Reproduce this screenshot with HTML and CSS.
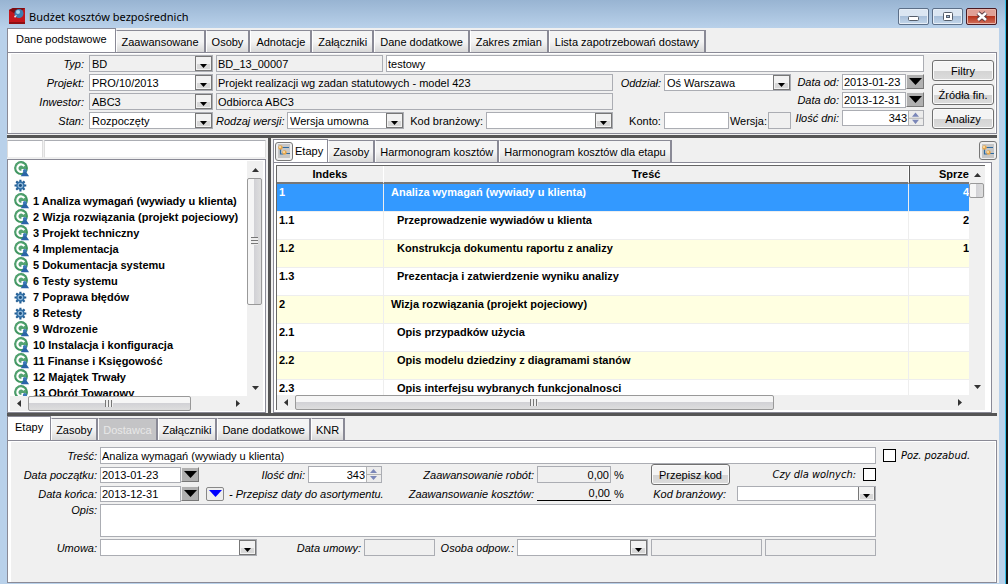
FILE: index.html
```html
<!DOCTYPE html>
<html lang="pl">
<head>
<meta charset="utf-8">
<title>Budżet kosztów bezpośrednich</title>
<link rel="stylesheet" href="styles.css">
</head>
<body>
<svg class="defs" aria-hidden="true">
  <symbol id="stage" viewBox="0 0 15 15">
    <circle cx="6.600" cy="6.600" r="6.500" fill="#3f9560"/>
    <circle cx="6.200" cy="6" r="5.200" fill="#62ad7d" opacity=".6"/>
    <path d="M9.600 4.800A3.500 3.500 0 1 0 9.600 8.600H7" fill="none" stroke="#fff" stroke-width="2"/>
    <circle cx="10.200" cy="9.400" r="1.900" fill="#3a78b8"/>
    <path d="M6.200 14.200 8.800 10.600h2.800l2.600 3.600z" fill="#2a64a8"/>
  </symbol>
  <symbol id="gear" viewBox="0 -2 15 15">
    <g stroke="#235d92" stroke-width="2"><path d="M6 .5v11M.5 6h11M2.100 2.100l7.800 7.800M9.900 2.100 2.100 9.900"/></g>
    <circle cx="6" cy="6" r="4" fill="#2f6ea6"/><circle cx="6" cy="6" r="2.600" fill="#8fb8da"/><circle cx="6" cy="6" r="1.400" fill="#1c4f80"/>
  </symbol>
  <symbol id="org" viewBox="0 0 14 14">
    <path d="M1 0h12v14H1z" fill="#c6c6c6"/>
    <path d="M3.500 5v5h3M5 3.500h7M9 9.500h4" fill="none" stroke="#2d6aa0" stroke-width="1.200"/>
    <circle cx="3.500" cy="3.500" r="2.200" fill="#e7a64b"/><circle cx="7.500" cy="8.500" r="2.200" fill="#e7a64b"/>
    <circle cx="3" cy="3" r="1" fill="#fbe2b0"/><circle cx="7" cy="8" r="1" fill="#fbe2b0"/>
  </symbol>
  <symbol id="up" viewBox="0 0 7 4"><path d="M0 4 3.500 0 7 4z" fill="#333"/></symbol>
  <symbol id="down" viewBox="0 0 7 4"><path d="M0 0h7L3.500 4z" fill="#333"/></symbol>
  <symbol id="left" viewBox="0 0 4 7"><path d="M4 0v7L0 3.500z" fill="#333"/></symbol>
  <symbol id="right" viewBox="0 0 4 7"><path d="M0 0v7L4 3.500z" fill="#333"/></symbol>
  <symbol id="pick" viewBox="0 0 13 7"><path d="M0 0h13L6.500 7z" fill="currentColor"/></symbol>
</svg>

<header class="titlebar">
  <svg class="logo" viewBox="0 0 16 16"><path d="M0 2 4 0h12v16H0z" fill="#c4161c"/><path d="M0 2 4 0h12L8 7z" fill="#7c0d12"/><path d="M0 16h16v-2H0z" fill="#8f0f14"/><circle cx="10" cy="5.500" r="4.500" fill="#3f7fb0"/><circle cx="9" cy="4" r="2" fill="#a8d4ea"/><path d="M8 7 6 10 5 8z" fill="#e8f2f8"/></svg>
  <h1>Budżet kosztów bezpośrednich</h1>
  <button class="win" aria-label="Minimalizuj"><svg viewBox="0 0 29 15"><rect x="9.500" y="7.500" width="10" height="4" rx="1" fill="#fff" stroke="#555e6b"/></svg></button>
  <button class="win" aria-label="Przywróć"><svg viewBox="0 0 29 15"><rect x="10.500" y="3.500" width="9" height="8" rx="1" fill="#fff" stroke="#555e6b"/><rect x="13.500" y="6.500" width="3" height="2" fill="#9fb8d4" stroke="#555e6b"/></svg></button>
  <button class="win close" aria-label="Zamknij"><svg viewBox="0 0 29 15"><path d="m11 4 8 7m0-7-8 7" stroke="#5a3a42" stroke-width="4.400"/><path d="m11 4 8 7m0-7-8 7" stroke="#fff" stroke-width="2.600"/></svg></button>
</header>

<main class="frame">
  <nav class="tabs top-tabs">
    <button class="tab on">Dane podstawowe</button><button class="tab">Zaawansowane</button><button class="tab">Osoby</button><button class="tab">Adnotacje</button><button class="tab">Załączniki</button><button class="tab">Dane dodatkowe</button><button class="tab">Zakres zmian</button><button class="tab">Lista zapotrzebowań dostawy</button>
  </nav>
  <form class="panel head-form">
    <div class="fields">
      <div class="row">
        <label class="lead" for="typ">Typ:</label>
        <select id="typ" class="off w-code"><option>BD</option></select>
        <input class="off w-number" aria-label="Numer" value="BD_13_00007" readonly>
        <input class="grow" aria-label="Nazwa" value="testowy">
      </div>
      <div class="split">
        <div class="rows grow">
          <div class="row">
            <label class="lead" for="proj">Projekt:</label>
            <select id="proj" class="w-code"><option>PRO/10/2013</option></select>
            <input class="off grow" aria-label="Nazwa projektu" value="Projekt realizacji wg zadan statutowych - model 423" readonly>
            <label class="side" for="odd">Oddział:</label>
            <select id="odd" class="w-branch"><option>Oś Warszawa</option></select>
          </div>
          <div class="row">
            <label class="lead" for="inw">Inwestor:</label>
            <select id="inw" class="off w-code"><option>ABC3</option></select>
            <input class="off grow" aria-label="Nazwa inwestora" value="Odbiorca ABC3" readonly>
            <span class="side-space"></span>
          </div>
          <div class="row">
            <label class="lead" for="stan">Stan:</label>
            <select id="stan" class="w-code"><option>Rozpoczęty</option></select>
            <label class="w-kind" for="rodz">Rodzaj wersji:</label>
            <select id="rodz" class="w-kindbox"><option>Wersja umowna</option></select>
            <label class="plain w-trade" for="kodb">Kod branżowy:</label>
            <select id="kodb" class="grow"><option></option></select>
            <label class="plain side" for="konto">Konto:</label>
            <input id="konto" class="w-account">
            <label class="plain tight" for="wer">Wersja:</label>
            <input id="wer" class="off w-version" readonly>
          </div>
        </div>
        <div class="dates">
          <div class="row"><label for="dod">Data od:</label><span class="date"><input id="dod" value="2013-01-23"><button type="button" class="pick" aria-label="Wybierz datę"><svg><use href="#pick"/></svg></button></span></div>
          <div class="row"><label for="ddo">Data do:</label><span class="date"><input id="ddo" value="2013-12-31"><button type="button" class="pick" aria-label="Wybierz datę"><svg><use href="#pick"/></svg></button></span></div>
          <div class="row"><label for="dni">Ilość dni:</label><span class="date"><input id="dni" class="spin" value="343"></span></div>
        </div>
      </div>
    </div>
    <div class="actions"><button type="button" class="btn">Filtry</button><button type="button" class="btn">Źródła fin.</button><button type="button" class="btn">Analizy</button></div>
  </form>

  <section class="middle">
    <aside class="tree-pane">
      <div class="filters"><input class="f-id" aria-label="Filtr numeru"><input class="grow" aria-label="Filtr nazwy"></div>
      <div class="tree-box">
        <div class="scroll-area">
          <ul class="tree">
            <li><svg><use href="#stage"/></svg></li>
            <li><svg><use href="#gear"/></svg></li>
            <li><svg><use href="#stage"/></svg>1 Analiza wymagań (wywiady u klienta)</li>
            <li><svg><use href="#stage"/></svg>2 Wizja rozwiązania (projekt pojeciowy)</li>
            <li><svg><use href="#stage"/></svg>3 Projekt techniczny</li>
            <li><svg><use href="#stage"/></svg>4 Implementacja</li>
            <li><svg><use href="#stage"/></svg>5 Dokumentacja systemu</li>
            <li><svg><use href="#stage"/></svg>6 Testy systemu</li>
            <li><svg><use href="#gear"/></svg>7 Poprawa błędów</li>
            <li><svg><use href="#gear"/></svg>8 Retesty</li>
            <li><svg><use href="#stage"/></svg>9 Wdrozenie</li>
            <li><svg><use href="#stage"/></svg>10 Instalacja i konfiguracja</li>
            <li><svg><use href="#stage"/></svg>11 Finanse i Księgowość</li>
            <li><svg><use href="#stage"/></svg>12 Majątek Trwały</li>
            <li><svg><use href="#stage"/></svg>13 Obrót Towarowy</li>
          </ul>
          <div class="vbar"><svg class="v"><use href="#up"/></svg><div class="track"><div class="thumb tall"></div></div><svg class="v"><use href="#down"/></svg></div>
        </div>
        <div class="hbar"><svg class="h"><use href="#left"/></svg><div class="track"><div class="thumb wide"></div></div><svg class="h"><use href="#right"/></svg><span class="corner"></span></div>
      </div>
    </aside>

    <div class="grid-pane">
      <nav class="tabs grid-tabs">
        <div class="tab on with-icon"><button class="icon-btn" aria-label="Drzewo"><svg><use href="#org"/></svg></button><button class="bare">Etapy</button></div><button class="tab">Zasoby</button><button class="tab">Harmonogram kosztów</button><button class="tab">Harmonogram kosztów dla etapu</button>
        <button class="icon-btn end" aria-label="Układ"><svg><use href="#org"/></svg></button>
      </nav>
      <div class="grid-box"><div class="grid-inner">
        <div class="scroll-area">
          <div class="table-clip">
            <table>
              <thead><tr><th class="c-id">Indeks</th><th>Treść</th><th class="c-eq">Sprze</th></tr></thead>
              <tbody>
                <tr class="sel"><td>1</td><td>Analiza wymagań (wywiady u klienta)</td><td>4</td></tr>
                <tr><td>1.1</td><td class="sub">Przeprowadzenie wywiadów u klienta</td><td>2</td></tr>
                <tr><td>1.2</td><td class="sub">Konstrukcja dokumentu raportu z analizy</td><td>1</td></tr>
                <tr><td>1.3</td><td class="sub">Prezentacja i zatwierdzenie wyniku analizy</td><td></td></tr>
                <tr><td>2</td><td>Wizja rozwiązania (projekt pojeciowy)</td><td></td></tr>
                <tr><td>2.1</td><td class="sub">Opis przypadków użycia</td><td></td></tr>
                <tr><td>2.2</td><td class="sub">Opis modelu dziedziny z diagramami stanów</td><td></td></tr>
                <tr><td>2.3</td><td class="sub">Opis interfejsu wybranych funkcjonalnosci</td><td></td></tr>
              </tbody>
            </table>
          </div>
          <div class="vbar"><svg class="v"><use href="#up"/></svg><div class="track"><div class="thumb short"></div></div><svg class="v"><use href="#down"/></svg></div>
        </div>
        <div class="hbar"><svg class="h"><use href="#left"/></svg><div class="track"><div class="thumb wide"></div></div><svg class="h"><use href="#right"/></svg><span class="corner"></span></div>
      </div></div>
    </div>
  </section>

  <nav class="tabs low-tabs">
    <button class="tab on">Etapy</button><button class="tab">Zasoby</button><button class="tab" disabled>Dostawca</button><button class="tab">Załączniki</button><button class="tab">Dane dodatkowe</button><button class="tab">KNR</button>
  </nav>
  <form class="panel detail-form">
    <div class="row">
      <label class="lead" for="tresc">Treść:</label>
      <input id="tresc" class="grow" value="Analiza wymagań (wywiady u klienta)">
      <span class="outside"><input type="checkbox" id="poz"><label class="ui" for="poz">Poz. pozabud.</label></span>
    </div>
    <div class="row">
      <label class="lead" for="dpo">Data początku:</label>
      <span class="date"><input id="dpo" value="2013-01-23"><button type="button" class="pick" aria-label="Wybierz datę"><svg><use href="#pick"/></svg></button></span>
      <label class="w-days" for="dn2">Ilość dni:</label>
      <input id="dn2" class="spin w-spin" value="343">
      <label class="grow" for="zr">Zaawansowanie robót:</label>
      <input id="zr" class="off num w-spin" value="0,00" readonly><span class="pct">%</span>
      <span class="w-copy"><button type="button" class="btn">Przepisz kod</button></span>
      <span class="w-free"><label class="ui" for="wol">Czy dla wolnych:</label><input type="checkbox" id="wol"></span>
      <span class="outside"></span>
    </div>
    <div class="row">
      <label class="lead" for="dko">Data końca:</label>
      <span class="date"><input id="dko" value="2013-12-31"><button type="button" class="pick" aria-label="Wybierz datę"><svg><use href="#pick"/></svg></button></span>
      <button type="button" class="copy-dates" aria-label="Przepisz daty"><svg><use href="#pick"/></svg></button>
      <span class="hint">- Przepisz daty do asortymentu.</span>
      <label class="grow" for="zk">Zaawansowanie kosztów:</label>
      <input id="zk" class="line num w-spin" value="0,00" readonly><span class="pct">%</span>
      <label class="w-copy" for="kb2">Kod branżowy:</label>
      <span class="w-free"><select id="kb2" class="w-trade2"><option></option></select></span>
      <span class="outside"></span>
    </div>
    <div class="row memo">
      <label class="lead" for="opis">Opis:</label>
      <textarea id="opis" class="grow"></textarea>
      <span class="outside"></span>
    </div>
    <div class="row">
      <label class="lead" for="umo">Umowa:</label>
      <select id="umo" class="w-contract"><option></option></select>
      <label class="w-cdate" for="dum">Data umowy:</label>
      <input id="dum" class="off w-cfield" readonly>
      <label class="w-person" for="oso">Osoba odpow.:</label>
      <select id="oso" class="w-personbox"><option></option></select>
      <input class="off grow" aria-label="Imię" readonly>
      <input class="off grow" aria-label="Nazwisko" readonly>
      <span class="outside"></span>
    </div>
  </form>
</main>
</body>
</html>
```

FILE: styles.css
```css
* { box-sizing: border-box; }
body {
  margin: 0; height: 100vh; display: flex; flex-direction: column; overflow: hidden;
  font: 11px "Liberation Sans", Arial, sans-serif; color: #000; background: #b9d1ea;
  border-right: 2px solid #111; box-shadow: inset -1px 0 #38c0e8;
}
button, input, select, textarea { font: inherit; color: inherit; margin: 0; border-radius: 0; }
button { padding: 0; }
.defs { position: absolute; width: 0; height: 0; }
.grow { flex: 1; min-width: 0; }

.titlebar { display: flex; align-items: center; gap: 3px; height: 28px; flex: none; padding: 4px 8px 0 9px; background: linear-gradient(#98b4d2, #b9d1ea); border-right: 1px solid #38c0e8; }
.titlebar h1 { flex: 1; margin: 0 0 0 1px; font: 11px "Noto Sans", "Open Sans", sans-serif; }
.logo { width: 16px; height: 16px; }
.win { width: 31px; height: 17px; border: 1px solid #5c6f88; border-radius: 2px; background: linear-gradient(#dbe6f2 45%, #a9c0da 50%, #c3d6ea); box-shadow: inset 0 0 0 1px #e6eef7; }
.win svg { display: block; width: 29px; height: 15px; }
.close { border-color: #4b1a22; background: linear-gradient(#e0a096 45%, #b8341d 50%, #d0705c); box-shadow: inset 0 0 0 1px #e8b5aa; }

.frame { flex: 1; min-height: 0; display: flex; flex-direction: column; margin: 0 7px 1px 7px; padding-right: 2px; background: #f0f0f0; }

.tabs { display: flex; align-items: flex-end; flex: none; height: 24px; }
.tab { height: 22px; padding: 0 4px; border: 1px solid #8a8a96; border-left-color: #fff; border-right-width: 2px; border-bottom: 0; background: linear-gradient(#f4f4f4 50%, #d9d9d9); white-space: nowrap; }
.tab.on { height: 24px; padding: 0 7px 3px; background: #fff; border-right-width: 1px; border-left-color: #8a8a96; }
.tab:disabled { background: #c4c4c6; color: #e8e8e8; }
.top-tabs .tab { padding: 0 5px; }
.top-tabs .tab.on { padding: 0 8px 3px; }

.panel { flex: none; border: 1px solid #8a8a96; background: #f0f0f0; box-shadow: inset 3px 1px #fff, inset -1px 0 #fff; }
.row { display: flex; align-items: center; height: 17px; gap: 3px; }
label { font-style: italic; text-align: right; white-space: nowrap; }
label.plain { font-style: normal; }
label.ui { font-family: "DejaVu Sans Condensed", "Noto Sans", sans-serif; }
label.tight { margin: 0 -2px; }
input, select, textarea { height: 17px; border: 1px solid #abadb3; padding: 0 1px; background: #fff; outline: 0; }
textarea { resize: none; height: 100%; }
select {
  appearance: none; padding: 0 20px 0 2px;
  background: #fff url("data:image/svg+xml,%3Csvg xmlns='http://www.w3.org/2000/svg' width='17' height='15'%3E%3Crect x='.5' y='.5' width='16' height='14' fill='%23f2f2f2' stroke='%23777'/%3E%3Crect x='2' y='8' width='13' height='5' fill='%23d8d8d8'/%3E%3Cpath d='M5 8h7l-3.500 4z'/%3E%3C/svg%3E") no-repeat right center;
}
.off { background-color: #f0f0f0; }
.num { text-align: right; }
.spin {
  text-align: right; padding-right: 16px;
  background: #fff url("data:image/svg+xml,%3Csvg xmlns='http://www.w3.org/2000/svg' width='15' height='15'%3E%3Crect width='15' height='15' fill='%23ececec'/%3E%3Cpath d='M.5 0v15M1 7.500h14' stroke='%23b4b4b4'/%3E%3Cpath d='M4 6h7L7.500 2zM4 9h7l-3.500 4z' fill='%237a86b8'/%3E%3C/svg%3E") no-repeat right center;
}
.line { background: transparent; border: 0; border-bottom: 1px solid #000; height: 14px; }

.btn { width: 100%; height: 21px; border: 1px solid #707070; border-radius: 3px; background: linear-gradient(#f4f4f4 50%, #d4d4d4 55%, #dcdcdc); box-shadow: inset 0 0 0 1px #fafafa; }
.date { display: flex; width: 99px; height: 16px; }
.date input { flex: 1; min-width: 0; height: 16px; }
.pick { width: 18px; height: 15px; border: 1px solid; border-color: #eee #777 #777 #eee; background: #b0b0b0; }
.pick svg, .copy-dates svg { display: block; width: 13px; height: 7px; margin: 0 auto; }

.head-form { display: flex; gap: 8px; padding: 2px 2px 4px 3px; }
.fields { flex: 1; min-width: 0; display: flex; flex-direction: column; gap: 2px; }
.split { display: flex; gap: 3px; }
.rows, .dates { display: flex; flex-direction: column; gap: 2px; }
.dates { width: 130px; }
.dates .row { height: 16px; justify-content: flex-end; }
.dates .date { width: 82px; }
.head-form .lead { width: 73px; margin-right: 2px; }
.actions { width: 62px; display: flex; flex-direction: column; gap: 3px; padding-top: 5px; }
.w-code { width: 124px; }
.w-number { width: 167px; }
.side { width: 45px; }
.side-space { width: 175px; }
.w-branch { width: 127px; }
.w-kind { width: 68px; }
.w-kindbox { width: 117px; }
.w-trade { width: 76px; }
.w-account { width: 65px; }
.w-version { width: 23px; }

.middle { flex: 1; min-height: 0; display: flex; border: solid #555; border-width: 3px 0; margin-top: 1px; }
.tree-pane { width: 264px; flex: none; display: flex; flex-direction: column; padding: 2px 2px 0 0; border-right: 3px solid #555; }
.filters { display: flex; gap: 1px; height: 19px; }
.filters input { height: 18px; border-color: #abadb3 #ddd #eee; }
.f-id { width: 36px; }
.tree-box { flex: 1; min-height: 0; display: flex; flex-direction: column; background: #fff; border: 1px solid #8a8a96; padding: 1px 2px; }
.scroll-area { flex: 1; min-height: 0; display: flex; overflow: hidden; }
.tree { flex: 1; min-width: 0; margin: 0; padding: 0 0 0 4px; list-style: none; font-weight: bold; overflow: hidden; }
.tree li { display: flex; align-items: center; height: 16px; white-space: nowrap; }
.tree svg { flex: none; width: 16px; height: 16px; margin-right: 3px; }
.vbar { width: 16px; flex: none; display: flex; flex-direction: column; align-items: center; background: #f0f0f0; }
.v { width: 7px; height: 4px; margin: 7px 0 6px; }
.vbar .track { flex: 1; width: 100%; }
.hbar { display: flex; align-items: center; height: 15px; flex: none; background: #f0f0f0; }
.h { width: 4px; height: 7px; margin: 0 7px; }
.hbar .track { flex: 1; height: 15px; }
.thumb { border: 1px solid #999; border-radius: 2px; }
.vbar .thumb { width: 15px; background: linear-gradient(90deg, #f6f6f6 45%, #d2d2d6 50%, #dedede); }
.hbar .thumb { height: 15px; background: linear-gradient(#f6f6f6 45%, #d2d2d6 50%, #dedede); }
.tall { height: 63%; display: flex; align-items: center; justify-content: center; }
.vbar .tall::before { content: ""; width: 7px; height: 8px; background: repeating-linear-gradient(#777 0 1px, #eee 1px 3px); }
.short { height: 15px; }
.wide { width: 73%; display: flex; align-items: center; justify-content: center; }
.wide::before { content: ""; width: 8px; height: 7px; background: repeating-linear-gradient(90deg, #777 0 1px, #eee 1px 3px); }
.tree-box .wide { width: 81%; }
.corner { width: 16px; }

.grid-pane { flex: 1; min-width: 0; display: flex; flex-direction: column; padding: 1px 0 0 2px; }
.grid-tabs { height: 23px; }
.grid-tabs .on { height: 23px; }
.with-icon { display: flex; align-items: center; gap: 2px; }
.grid-tabs .with-icon { padding: 0 4px 0 1px; }
.bare { border: 0; background: none; }
.icon-btn { width: 18px; height: 19px; border: 1px solid #777; border-radius: 3px; background: #eee; }
.icon-btn svg { display: block; width: 14px; height: 14px; margin: 0 auto; }
.end { margin: 0 0 2px auto; }
.grid-box { flex: 1; min-height: 0; display: flex; margin-right: 5px; background: #fff; border: 1px solid #8a8a96; padding: 2px 6px 2px 2px; }
.grid-inner { flex: 1; min-width: 0; display: flex; flex-direction: column; border: solid #666; border-width: 1px 0 0 1px; }
.table-clip { flex: 1; min-width: 0; overflow: hidden; background: #fff; }
table { width: 100%; table-layout: fixed; border-collapse: separate; border-spacing: 0; font-weight: bold; }
th { height: 18px; padding: 0; background: #f0f0f0; border-right: 1px solid #fff; border-bottom: 2px solid #777; }
.c-id { width: 107px; }
.c-eq { width: 60px; text-align: right; border-left: 1px solid #555; }
td { height: 28px; padding: 2px 3px 0 2px; vertical-align: top; white-space: nowrap; overflow: hidden; border-right: 1px solid #eee; border-bottom: 1px solid #eee; }
td:nth-child(2) { padding-left: 7px; }
td.sub { padding-left: 13px; }
td:nth-child(3) { text-align: right; padding-right: 0; border-right: 0; }
th.c-eq { border-right: 0; }
tbody tr:nth-child(odd) td { background: #ffffe1; }
tbody tr:nth-child(even) td { background: #fff; }
tbody tr.sel td { background: #3399ff; color: #fff; }

.detail-form { display: flex; flex-direction: column; gap: 2px; padding: 6px 3px 26px; }
.detail-form .lead { width: 86px; }
.outside { width: 114px; display: flex; align-items: center; gap: 5px; padding-left: 4px; }
.detail-form [type=checkbox] { appearance: none; width: 13px; height: 13px; border: 1px solid #000; }
.w-days { width: 103px; }
.w-spin { width: 74px; }
.pct { width: 12px; }
.w-copy { width: 101px; display: flex; align-items: center; }
.w-copy .btn { width: 79px; margin-left: 22px; }
label.w-copy { display: block; padding-right: 4px; }
.w-free { width: 143px; display: flex; align-items: center; justify-content: flex-end; gap: 7px; }
.w-trade2 { width: 139px; height: 15px; }
.copy-dates { width: 18px; height: 14px; margin-left: 4px; border: 1px solid #888; border-radius: 2px; background: #eee; color: #00f; }
.hint { width: 157px; padding-left: 2px; font-style: italic; white-space: nowrap; }
.memo { height: 33px; align-items: flex-start; }
.w-contract { width: 157px; }
.w-cdate { width: 101px; }
.w-cfield { width: 71px; }
.w-person { width: 76px; }
.w-personbox { width: 131px; }
```
